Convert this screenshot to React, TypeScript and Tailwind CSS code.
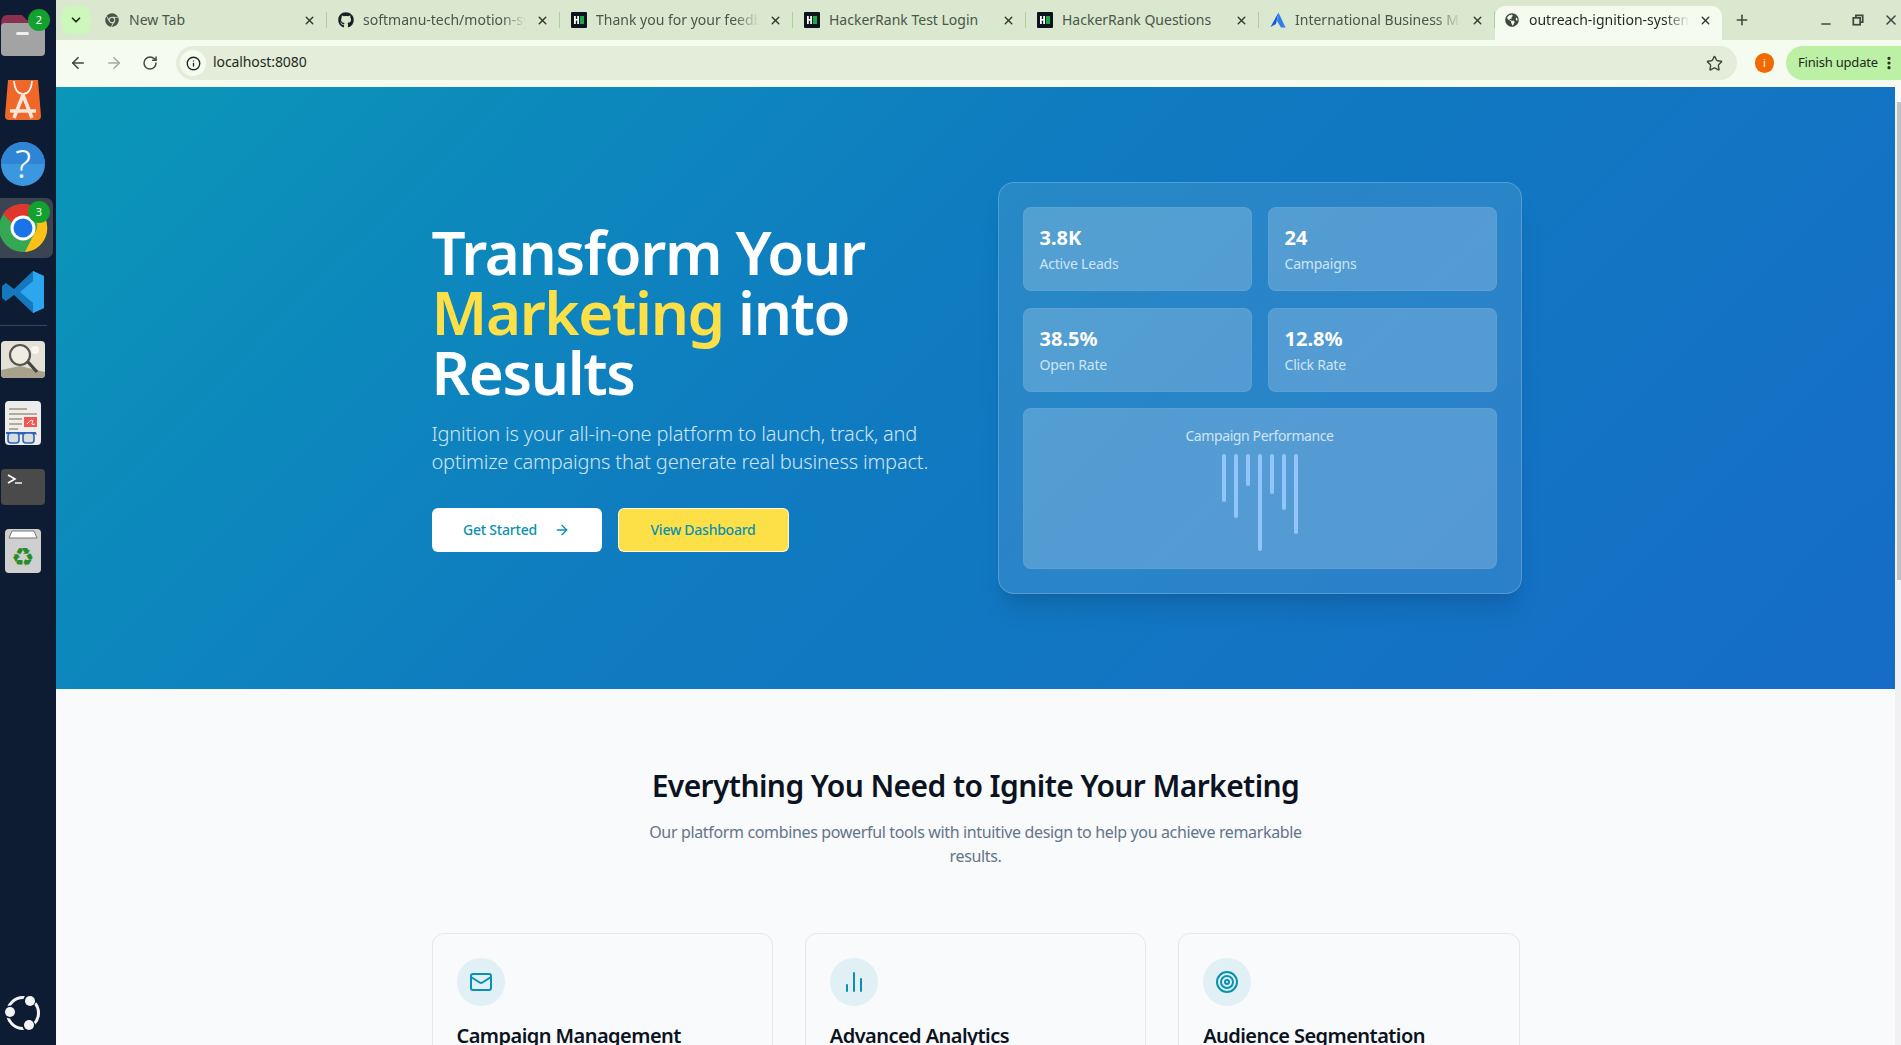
import { ArrowLeft, ArrowRight, RotateCw, Star, X, Plus, Minus, ChevronDown, Info, Mail, ChartNoAxesColumn, Target, EllipsisVertical } from "lucide-react";
import { FaChrome, FaGithub, FaGlobeAmericas } from "react-icons/fa";
import type { ReactNode } from "react";

const font = "font-['Noto_Sans',sans-serif]";

function Hr() {
  return (
    <svg viewBox="0 0 16 16" className="w-4 h-4 shrink-0">
      <rect width="16" height="16" rx="1" fill="#0e141e" />
      <rect x="3" y="4" width="1.8" height="8" fill="#fff" />
      <rect x="6.2" y="4" width="1.8" height="8" fill="#fff" />
      <rect x="3" y="7" width="5" height="1.6" fill="#fff" />
      <rect x="9" y="4" width="4" height="8" fill="#1ba94c" />
    </svg>
  );
}

function Atl() {
  return (
    <svg viewBox="0 0 16 16" className="w-4 h-4 shrink-0">
      <path d="M8.5 0.5 L0.5 15 L6 12 Z" fill="#1a56db" />
      <path d="M8.5 0.5 L15.5 15.5 L11 15.5 L7 9 Z" fill="#2f80ed" />
    </svg>
  );
}

function Tab({ icon, title, active, fade, w = "w-[233px]" }: { icon: ReactNode; title: string; active?: boolean; fade?: boolean; w?: string }) {
  return (
    <div className={`${w} shrink-0 flex items-center pr-[10px] ${active ? "pl-[9px] h-[34px] mt-[6px] pb-[6px] bg-[#f6fbef] rounded-t-[10px] text-[#1f2a1c]" : "pl-[11px] h-[16px] mt-[12px] border-r border-[#a9d29a] text-[#4a5648]"}`}>
      <span className="w-4 flex justify-center shrink-0">{icon}</span>
      <span className={`ml-[9px] flex-1 min-w-0 overflow-hidden whitespace-nowrap text-[14px] leading-5 ${fade ? "[mask-image:linear-gradient(to_right,black_85%,transparent)]" : ""}`}>{title}</span>
      <X className="w-[13px] h-[13px] ml-[10px] shrink-0 text-[#2e3a2c]" strokeWidth={2.6} />
    </div>
  );
}

function Slot({ y, h, children }: { y: number; h: number; children: ReactNode }) {
  return (
    <svg viewBox={`0 ${y} 56 ${h}`} className="w-[56px] block shrink-0" style={{ height: h }}>
      {children}
    </svg>
  );
}

function Badge({ cx, cy, n }: { cx: number; cy: number; n: string }) {
  return (
    <g>
      <circle cx={cx} cy={cy} r="11" fill="#12a02e" />
      <text x={cx} y={cy + 4} textAnchor="middle" fontSize="11" fill="#fff" fontFamily="Noto Sans, sans-serif">{n}</text>
    </g>
  );
}

function Dock() {
  return (
    <div className="w-[56px] shrink-0 bg-[#0e1c33] flex flex-col h-full">
      <Slot y={0} h={66}>
        <path d="M1 24 Q1 15 7 15 H22 L27 20 H38 Q45 20 45 26 V32 H1Z" fill="#8c3050" />
        <rect x="1" y="23" width="44" height="33" rx="4" fill="#a3a3a3" />
        <rect x="16" y="32" width="13" height="3" rx="1.5" fill="#eee" />
        <Badge cx={39} cy={20} n="2" />
      </Slot>
      <Slot y={66} h={64}>
        <path d="M8 80 H38 L41 116 Q41 120 37 120 H9 Q5 120 5 116Z" fill="#f0672a" />
        <path d="M14 81 Q15 94 23 94 Q31 94 32 81" stroke="#fff" strokeWidth="1.6" fill="none" />
        <path d="M23 95 L14 118 M23 95 L32 118 M10 111 H36" stroke="#fde6d8" strokeWidth="3.5" fill="none" />
      </Slot>
      <Slot y={130} h={68}>
        <circle cx="23" cy="164" r="22" fill="#3b98e0" />
        <path d="M1 164 A22 22 0 0 1 45 164Z" fill="#2e85d4" />
        <text x="23" y="178" textAnchor="middle" fontSize="38" fontWeight="300" fill="#fff" fontFamily="Noto Sans, sans-serif">?</text>
      </Slot>
      <Slot y={198} h={60}>
        <rect x="-8" y="198" width="61" height="60" rx="7" fill="#3b4452" />
        <circle cx="23" cy="228" r="24" fill="#34a853" />
        <path d="M23 204 A24 24 0 0 1 44 216 H23 A12 12 0 0 0 12 223 L3 214 A24 24 0 0 1 23 204Z" fill="#e0362c" />
        <path d="M44 216 A24 24 0 0 1 25 252 L34 234 A12 12 0 0 0 32 216Z" fill="#fbc116" />
        <circle cx="23" cy="228" r="12.5" fill="#fff" />
        <circle cx="23" cy="228" r="9.5" fill="#1a73e8" />
        <Badge cx={39} cy={212} n="3" />
      </Slot>
      <Slot y={258} h={67}>
        <path d="M33 271 L44 276 V308 L33 313 L14 295 L6 301 L2 298 V286 L6 283 L14 289Z" fill="#1578bd" />
        <path d="M33 271 L44 276 V308 L33 313 Z M33 281 L20 292 L33 303Z" fill="#2ba6ef" fillRule="evenodd" />
      </Slot>
      <div className="h-px w-[47px] bg-[#3a4556] shrink-0" />
      <Slot y={326} h={74}>
        <rect x="1" y="341" width="44" height="37" rx="4" fill="#e4e1d6" />
        <path d="M1 370 L20 366 L45 372 V374 Q45 378 41 378 H5 Q1 378 1 374Z" fill="#a8a28c" />
        <circle cx="35" cy="350" r="4" fill="#f7f6f0" />
        <circle cx="20" cy="355" r="10" fill="#efece2" stroke="#555" strokeWidth="2.2" />
        <path d="M28 362 L37 372" stroke="#444" strokeWidth="3.2" />
      </Slot>
      <Slot y={400} h={69}>
        <rect x="5" y="401" width="36" height="44" rx="4" fill="#ededed" />
        <path d="M9 409 H27 M9 414 H37 M9 419 H22 M9 424 H22 M9 429 H18 M9 434 H37" stroke="#b3ab95" strokeWidth="2" />
        <rect x="24" y="417" width="13" height="10" fill="#f2564f" />
        <path d="M27 424 Q32 418 33 421 Q30 426 35 424" stroke="#fff" strokeWidth="1" fill="none" />
        <path d="M6 433 H36" stroke="#2b66b8" strokeWidth="2" />
        <rect x="8" y="433" width="11" height="10" rx="3" fill="#d8dde0" stroke="#2b66b8" strokeWidth="1.6" />
        <rect x="23" y="433" width="11" height="10" rx="3" fill="#d8dde0" stroke="#2b66b8" strokeWidth="1.6" />
      </Slot>
      <Slot y={469} h={60}>
        <rect x="1" y="469" width="44" height="36" rx="4" fill="#4a4a4a" />
        <path d="M8 475 L15 479 L8 483" stroke="#fff" strokeWidth="1.6" fill="none" />
        <path d="M15 483 H22" stroke="#fff" strokeWidth="1.4" />
      </Slot>
      <Slot y={529} h={48}>
        <rect x="5" y="529" width="36" height="44" rx="4" fill="#cfcfcf" />
        <path d="M9 538 L12 531 H34 L37 538Z" fill="#fff" stroke="#777" strokeWidth="1" />
        <text x="23" y="566" textAnchor="middle" fontSize="26" fill="#2a8b2a" fontFamily="DejaVu Sans, sans-serif">♻</text>
      </Slot>
      <div className="mt-auto pb-[12px] shrink-0">
        <svg viewBox="0 0 56 40" className="w-[56px] h-[40px] block">
          <circle cx="23" cy="20" r="15.5" fill="none" stroke="#f3f4f6" strokeWidth="3" />
          <circle cx="30" cy="7" r="6.5" fill="#0e1c33" />
          <circle cx="10" cy="19" r="6.5" fill="#0e1c33" />
          <circle cx="29" cy="33" r="6.5" fill="#0e1c33" />
          <circle cx="30" cy="8" r="5" fill="#f3f4f6" />
          <circle cx="10" cy="19" r="5" fill="#f3f4f6" />
          <circle cx="29" cy="32" r="5" fill="#f3f4f6" />
        </svg>
      </div>
    </div>
  );
}

function Browser() {
  return (
    <div className="shrink-0">
      <div className="h-[40px] bg-[#d9e8cf] flex items-start pl-[6px]">
        <div className="w-[28px] h-[28px] mt-[6px] rounded-[8px] bg-[#ccf9bb] flex items-center justify-center shrink-0">
          <ChevronDown className="w-[14px] h-[14px] text-[#1f2a1c]" strokeWidth={3} />
        </div>
        <div className="w-[3px] shrink-0" />
        <div className="flex items-start">
          <Tab icon={<FaChrome className="w-[14px] h-[14px] text-[#4a5648]" />} title="New Tab" w="w-[234px]" />
          <Tab icon={<FaGithub className="w-4 h-4 text-[#1b1f23]" />} title="softmanu-tech/motion-sync" fade />
          <Tab icon={<Hr />} title="Thank you for your feedback" fade />
          <Tab icon={<Hr />} title="HackerRank Test Login" />
          <Tab icon={<Hr />} title="HackerRank Questions" />
          <Tab icon={<Atl />} title="International Business Machines" fade w="w-[236px]" />
          <Tab icon={<FaGlobeAmericas className="w-[14px] h-[14px] text-[#3d4a3b]" />} title="outreach-ignition-system" fade active w="w-[227px]" />
        </div>
        <Plus className="w-[16px] h-[16px] ml-[12px] mt-[12px] text-[#3d4a3b]" strokeWidth={2.4} />
        <div className="ml-auto mt-[12px] flex items-center gap-[19px] pr-[2px] text-[#3d4a3b]">
          <Minus className="w-[14px] h-[14px] translate-y-[4px]" strokeWidth={2.4} />
          <svg viewBox="0 0 14 14" className="w-[12px] h-[12px]" fill="none" stroke="currentColor" strokeWidth="2">
            <rect x="1.5" y="4.5" width="8" height="8" />
            <path d="M4.5 4 V1.5 H12.5 V9.5 H10" />
          </svg>
          <X className="w-[16px] h-[16px]" strokeWidth={2.4} />
        </div>
      </div>
      <div className="h-[47px] bg-[#f6fbef] flex items-center text-[#3d4a3b] pb-px">
        <div className="w-[13px] shrink-0" />
        <ArrowLeft className="w-[18px] h-[18px]" strokeWidth={2.2} />
        <ArrowRight className="w-[18px] h-[18px] ml-[18px] text-[#a3ad9f]" strokeWidth={2.2} />
        <RotateCw className="w-[16px] h-[16px] ml-[19px]" strokeWidth={2.2} />
        <div className="ml-[18px] w-[1561px] h-[34px] rounded-full bg-[#e3edd9] flex items-center pl-[4px] pr-[14px]">
          <span className="w-[26px] h-[26px] rounded-full bg-[#f6fbef] flex items-center justify-center shrink-0">
            <Info className="w-[15px] h-[15px] text-[#1f2a1c]" strokeWidth={2.2} />
          </span>
          <span className="ml-[7px] text-[14px] leading-5 -translate-y-px text-[#1f2a1c] tracking-[-0.1px]">localhost:8080</span>
          <Star className="ml-auto w-[17px] h-[17px] text-[#3d4a3b]" strokeWidth={2} />
        </div>
        <span className="ml-[18px] w-[19px] h-[20px] rounded-full bg-[#f06a00] text-white text-[11px] flex items-center justify-center shrink-0">i</span>
        <div className="ml-[12px] flex-1 h-[34px] rounded-l-full bg-[#bbf0a5] flex items-center pl-[12px] pr-[4px] text-[13px] tracking-[-0.2px] text-[#1f2a1c] whitespace-nowrap">
          <span className="flex-1">Finish update</span>
          <EllipsisVertical className="w-4 h-4" strokeWidth={2.8} />
        </div>
      </div>
    </div>
  );
}

function Stat({ v, l }: { v: string; l: string }) {
  return (
    <div className="h-[84px] rounded-lg bg-white/20 border border-white/5 p-4">
      <div className="text-xl leading-7 font-bold text-white">{v}</div>
      <div className="text-sm leading-5 text-[#cfe4f6] mt-[2px] tracking-[-0.2px]">{l}</div>
    </div>
  );
}

const bars = [48, 64, 32, 97, 40, 56, 80];

function Hero() {
  return (
    <section className="h-[602px] bg-[linear-gradient(135deg,#0a97b8_0%,#0f7cc0_42%,#166cc6_100%)] shrink-0">
      <div className="w-[1088px] mx-auto h-full flex items-center justify-between">
        <div className="w-[520px]">
          <h1 className="text-[60px] leading-[60px] font-semibold text-white tracking-[-1.35px] -translate-y-[2px]">
            Transform Your<br />
            <span className="text-[#fde047]">Marketing</span> into<br />
            Results
          </h1>
          <p className="mt-4 text-xl leading-7 text-[#cfe4f6] font-light tracking-[-0.18px]">
            Ignition is your all-in-one platform to launch, track, and optimize campaigns that generate real business impact.
          </p>
          <div className="mt-[32px] flex gap-4">
            <button className="w-[170px] h-[44px] rounded-md bg-white text-[#0891b2] text-sm font-medium tracking-[-0.2px] flex items-center justify-center gap-[17px]">
              Get Started <ArrowRight className="w-4 h-4" />
            </button>
            <button className="w-[171px] h-[44px] rounded-md bg-[#fde047] border border-white/80 text-[#0891b2] text-sm font-medium tracking-[-0.25px] flex items-center justify-center">
              View Dashboard
            </button>
          </div>
        </div>
        <div className="w-[524px] h-[412px] -mr-[2px] rounded-2xl bg-white/10 border border-white/20 shadow-xl p-6 flex flex-col gap-4">
          <div className="grid grid-cols-2 gap-x-4 gap-y-[17px]">
            <Stat v="3.8K" l="Active Leads" />
            <Stat v="24" l="Campaigns" />
            <Stat v="38.5%" l="Open Rate" />
            <Stat v="12.8%" l="Click Rate" />
          </div>
          <div className="flex-1 rounded-lg bg-white/20 border border-white/5 flex flex-col items-center pt-[17px]">
            <div className="text-sm leading-5 text-[#cfe4f6] tracking-[-0.4px]">Campaign Performance</div>
            <div className="mt-[8px] flex items-start gap-2">
              {bars.map((h, i) => (
                <div key={i} className="w-1 rounded-full bg-[#93c5fd]" style={{ height: h }} />
              ))}
            </div>
          </div>
        </div>
      </div>
    </section>
  );
}

function Card({ icon, title }: { icon: ReactNode; title: string }) {
  return (
    <div className="h-[300px] rounded-xl border border-[#e2e8f0] bg-[#f8fafc] p-6">
      <div className="w-12 h-12 rounded-full bg-[#e0f0f5] flex items-center justify-center text-[#0891b2]">{icon}</div>
      <h3 className="mt-4 text-xl leading-7 font-semibold text-[#0b1220] tracking-[-0.55px]">{title}</h3>
    </div>
  );
}

export default function App() {
  return (
    <div className={`w-[1901px] h-[1045px] overflow-hidden flex bg-[#0e1c33] ${font}`}>
      <Dock />
      <div className="flex-1 min-w-0 flex flex-col h-full">
        <Browser />
        <div className="flex-1 min-h-0 flex">
          <div className="flex-1 min-w-0 overflow-hidden bg-[#f8fafc] flex flex-col">
            <Hero />
            <section className="pt-20 shrink-0">
              <h2 className="text-3xl leading-9 font-semibold text-center text-[#0b1220] tracking-[-0.6px] -translate-y-px">Everything You Need to Ignite Your Marketing</h2>
              <p className="mt-4 w-[672px] mx-auto text-center text-base leading-6 text-[#64748b] tracking-[-0.35px] -translate-y-px">
                Our platform combines powerful tools with intuitive design to help you achieve remarkable results.
              </p>
              <div className="mt-16 w-[1088px] mx-auto grid grid-cols-3 gap-8">
                <Card icon={<Mail className="w-6 h-6" />} title="Campaign Management" />
                <Card icon={<ChartNoAxesColumn className="w-6 h-6" />} title="Advanced Analytics" />
                <Card icon={<Target className="w-6 h-6" />} title="Audience Segmentation" />
              </div>
            </section>
          </div>
          <div className="w-[6px] shrink-0 bg-[#f1f1f1] flex flex-col">
            <div className="h-[15px] bg-[#f9f9f9] shrink-0" />
            <div className="h-[478px] ml-[2px] bg-[#c1c1c1] shrink-0" />
          </div>
        </div>
      </div>
    </div>
  );
}
